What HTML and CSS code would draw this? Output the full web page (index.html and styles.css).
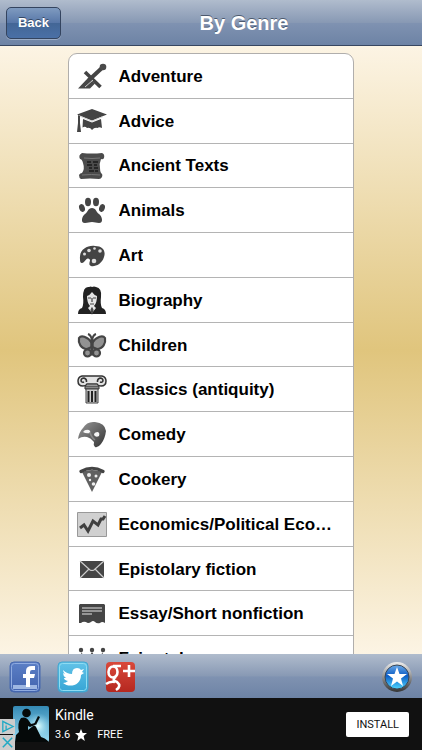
FILE: index.html
```html
<!DOCTYPE html>
<html lang="en">
<head>
<meta charset="utf-8">
<meta name="viewport" content="width=device-width, initial-scale=1">
<title>By Genre</title>
<link rel="stylesheet" href="styles.css">
</head>
<body>
<header class="navbar">
  <button class="back" type="button">Back</button>
  <h1 class="title">By Genre</h1>
</header>

<main class="content">
  <ul class="genres">
    <li><a class="genre" href="#adventure">
      <svg class="icon" viewBox="0 0 30 30"><g fill="none" stroke="#444"><path d="M12 18 26 5" stroke-width="4"/><path d="m8 10 15.500 15" stroke-width="3.600"/></g><circle cx="26" cy="5" r="3.300" fill="#4a4a4a"/><path fill="#484848" d="m1 26.500 10-10.500 7 5.500-5 5z"/><path d="m8 25 8-7" stroke="#ccc" stroke-width="1"/></svg>
      <span class="name">Adventure</span></a></li>
    <li><a class="genre" href="#advice">
      <svg class="icon" viewBox="0 0 30 30"><g fill="#444"><path d="M0 7.500 15 2l15 5.500L15 13.500zM6 12l9 3.500L24 12l1 9q-3-1.500-4.500 0-3-1-5.500 2-2-3-5-2-2-2-4.500-.5z"/><path d="m1 8 2 1v7l1 9H0l1-9z"/></g><path d="M3 9.200 15 14.300 26 9.500" fill="none" stroke="#ccc" stroke-width=".8"/></svg>
      <span class="name">Advice</span></a></li>
    <li><a class="genre" href="#ancient-texts">
      <svg class="icon" viewBox="0 0 30 30"><path fill="#4b4b4b" d="M5 2q10 1 20 0 3 1 2 5-1 2-3 1-2 5-1 9 0 4 1 5 2 1 1 4-1 2-3 2-9-1-18 0-2-1-2-4 1-2 3-2 3-4 1-10-1-4-3-4-2-4 2-6z"/><path d="M7 7q8 1 16 0M5 24q10-1 18 0" fill="none" stroke="#777"/><path d="M10 11h4m2 0h5M10 14h5m2 0h3m-8 3h3m2 0h4m-9 3h5m1 0h3" stroke="#1b1b1b" stroke-width="1.300"/></svg>
      <span class="name">Ancient Texts</span></a></li>
    <li><a class="genre" href="#animals">
      <svg class="icon" viewBox="0 0 30 30"><g fill="#454545"><ellipse cx="11" cy="6" rx="3" ry="4.200"/><ellipse cx="19" cy="6" rx="3" ry="4.200"/><ellipse cx="5" cy="12" rx="2.800" ry="4" transform="rotate(-20 5 12)"/><ellipse cx="25" cy="12" rx="2.800" ry="4" transform="rotate(20 25 12)"/><path d="M15 12c4 0 4 4 7 6s5 9 0 9c-3 0-4-1-7-1s-4 1-7 1c-5 0-3-7 0-9s3-6 7-6z"/></g></svg>
      <span class="name">Animals</span></a></li>
    <li><a class="genre" href="#art">
      <svg class="icon" viewBox="0 0 30 30"><path fill="#444" d="M3 18C2 9 10 4 18 5c8 0 11 5 9 11-2 7-9 10-13 9-4-2 1-6-2-7-3-2-4 4-7 4-2 0-2-2-2-4z"/><g fill="#ddd"><circle cx="7.500" cy="13" r="1.500"/><circle cx="12" cy="9.500" r="1.800"/><circle cx="17.500" cy="7.500" r="1.300"/><circle cx="23" cy="10" r="1.800"/><circle cx="17" cy="20" r="2.300"/></g></svg>
      <span class="name">Art</span></a></li>
    <li><a class="genre" href="#biography">
      <svg class="icon" viewBox="0 0 30 30"><path fill="#222" d="M1 28q0-5 4-6 2-4 1-11Q6 0 12 1q2-1 3 0 2-1 4 0 6 1 5 10-1 7 1 11 4 1 4 6z"/><path fill="#e4e4e4" d="M10 10q3-1 5-4 2 3 5 4 0 7-3 10l2 2-4 5-4-5 2-2q-3-3-3-10z"/><path d="M11 12h3m2 0h3m-4 0v4m-2 2h4m-2 4-1 2 1 3 1-3z" fill="#555" stroke="#444" stroke-width="1.200"/></svg>
      <span class="name">Biography</span></a></li>
    <li><a class="genre" href="#children">
      <svg class="icon" viewBox="0 0 30 30"><g fill="#929292" stroke="#454545" stroke-width="2.200"><path d="M15 12C10 5 4 4 2 7c-1 5 2 11 8 11l5-2 5 2c6 0 9-6 8-11-2-3-8-2-13 5z"/><circle cx="10.500" cy="22" r="3.500"/><circle cx="19.500" cy="22" r="3.500"/></g><path d="M15 9v15M15 9q-1-5-4-6M15 9q1-5 4-6" fill="none" stroke="#444" stroke-width="2"/><path d="M15 9v14" stroke="#444" stroke-width="3.400" stroke-linecap="round"/></svg>
      <span class="name">Children</span></a></li>
    <li><a class="genre" href="#classics">
      <svg class="icon" viewBox="0 0 30 30"><path d="M5 1h20q4 1 4 5 0 5-5 5-3 0-4-2H10q-1 2-4 2-5 0-5-5 0-4 4-5z" fill="#e2e2e2" stroke="#333" stroke-width="1.500"/><path d="M7 7Q5 8 4 6q0-3 3-3 3 1 2.500 4M23 7q2 1 3-1 0-3-3-3-3 1-2.500 4" fill="none" stroke="#333" stroke-width="1.500"/><path d="M8 11h14v3H8z" fill="#888" stroke="#333"/><path d="M9 14h12v14H9z" fill="#ccc" stroke="#444"/><path d="M11.500 16v11m3.500-11v11m3.500-11v11" stroke="#222" stroke-width="2"/></svg>
      <span class="name">Classics (antiquity)</span></a></li>
    <li><a class="genre" href="#comedy">
      <svg class="icon" viewBox="0 0 30 30"><defs><linearGradient id="mask" x2="1" y2="1"><stop stop-color="#999"/><stop offset="1" stop-color="#333"/></linearGradient></defs><path fill="url(#mask)" d="M1 19Q2 12 6 8q4-7 12-6 10 1 11 9-1 8-5 13-3 4-6 3-2-2-1-5-3-4-7-5-5-1-9 2z"/><path fill="#f5f5f5" d="M6 12q2-3 6-2 2 1 1 3-4 1-7-1zM17 15q0-3 4-3 2 1 1 4-3 2-5-1z"/><path d="M13 12q1 5 5 8" fill="none" stroke="#888" stroke-width="1.500"/></svg>
      <span class="name">Comedy</span></a></li>
    <li><a class="genre" href="#cookery">
      <svg class="icon" viewBox="0 0 30 30"><path fill="#606060" d="M5 7q10-4 20 0L15 27z"/><path d="M4 6.500Q15 0 26 6.500" fill="none" stroke="#444" stroke-width="3.200" stroke-linecap="round"/><g fill="#eee"><circle cx="12" cy="10" r="2"/><circle cx="19" cy="11" r="1.500"/><circle cx="13" cy="15" r="1.200"/><circle cx="16.500" cy="19" r="1.800"/></g></svg>
      <span class="name">Cookery</span></a></li>
    <li><a class="genre" href="#economics">
      <svg class="icon" viewBox="0 0 30 30"><path fill="#d0d0d0" stroke="#999" d="M.5 2.500h29v24H.5z"/><path d="m3 18 4-3 4 6 5-10 5 4 3-6h2l2-3" fill="none" stroke="#404040" stroke-width="3"/></svg>
      <span class="name">Economics/Political Eco…</span></a></li>
    <li><a class="genre" href="#epistolary">
      <svg class="icon" viewBox="0 0 30 30"><path fill="#454545" d="M3 6h24v17H3z"/><path d="m3 6 10 9q2 1 4 0l10-9M3 23l9-9m6 0 9 9" fill="none" stroke="#ccc" stroke-width="1.200"/></svg>
      <span class="name">Epistolary fiction</span></a></li>
    <li><a class="genre" href="#essay">
      <svg class="icon" viewBox="0 0 30 30"><path fill="#454545" d="M3 5h24l1 1v18q-3-2-5 0-3 1-5-1-2-2-4 0-3 2-5 0-3-1-5 1H2V6z"/><path d="M5 9h20M5 12h20M5 15h10" stroke="#e5e5e5" stroke-width="1.200"/></svg>
      <span class="name">Essay/Short nonfiction</span></a></li>
    <li><a class="genre" href="#fairy-tales">
      <svg class="icon" viewBox="0 0 30 30"><g fill="#454545"><circle cx="4" cy="6" r="2.200"/><circle cx="15" cy="6" r="2.200"/><circle cx="26" cy="6" r="2.200"/><path d="m4 8 6 8 5-8 5 8 6-8-3 17H7z"/></g></svg>
      <span class="name">Fairy tales</span></a></li>
  </ul>
</main>

<nav class="toolbar" aria-label="Share">
  <a class="tool" href="#facebook" aria-label="Facebook"><svg viewBox="0 0 32 32"><defs><linearGradient id="fb" x2="0" y2="1"><stop stop-color="#5c80c6"/><stop offset="1" stop-color="#4263ae"/></linearGradient></defs><rect x="1" y="1" width="30" height="30" rx="4" fill="url(#fb)" stroke="#4668ae" stroke-width="1"/><rect x="2.500" y="2.500" width="27" height="27" rx="3" fill="none" stroke="#8fabe0"/><path fill="#9eb7e2" d="M4 24h24v4H4z"/><path fill="#fff" d="M17 26V17h-3v-4h3v-3q0-5 6-5h3v4h-3q-2 0-2 2v2h5l-1 4h-4v9z"/></svg></a>
  <a class="tool" href="#twitter" aria-label="Twitter"><svg viewBox="0 0 32 32"><defs><linearGradient id="tw" x2="0" y2="1"><stop stop-color="#62c3e8"/><stop offset="1" stop-color="#36a5d5"/></linearGradient></defs><rect x="1" y="1" width="30" height="30" rx="4" fill="url(#tw)" stroke="#43a6cf" stroke-width="1"/><rect x="2.500" y="2.500" width="27" height="27" rx="3" fill="none" stroke="#8edcf2"/><path fill="#fff" d="M6 9q4 4 9 4 0-6 5-6 3 0 4 2l3-1-2 3 2 1-3 2c0 11-12 13-18 8q3 0 5-2-4-1-4-3h2q-3-2-3-5l2 1q-2-2-2-4z"/></svg></a>
  <a class="tool" href="#google-plus" aria-label="Google Plus"><svg viewBox="0 0 32 32"><defs><linearGradient id="gp" x2="0" y2="1"><stop stop-color="#d9493b"/><stop offset="1" stop-color="#b52820"/></linearGradient></defs><rect x="1" y="1" width="29" height="30" rx="4" fill="url(#gp)"/><g fill="none" stroke="#fff"><ellipse cx="8" cy="11" rx="4.500" ry="5.500" stroke-width="2.600"/><path d="M8 5h8M11 16q-5 3 1 5 5 4-1 8M1 23q4-3 9-2" stroke-width="2.600"/><path d="M18 10h12M24 4v12" stroke-width="2.600"/></g></svg></a>
  <a class="tool favorite" href="#favorites" aria-label="Favorites"><svg viewBox="0 0 32 32"><defs><linearGradient id="ring" x2="0" y2="1"><stop stop-color="#eee"/><stop offset="1" stop-color="#343434"/></linearGradient><linearGradient id="orb" x2="0" y2="1"><stop stop-color="#6aa9e8"/><stop offset=".45" stop-color="#0c5cc4"/><stop offset="1" stop-color="#4fd6ff"/></linearGradient></defs><circle cx="16" cy="16" r="15" fill="url(#ring)"/><circle cx="16" cy="16" r="12" fill="url(#orb)" stroke="#3b4756"/><path fill="#fff" d="m16 6 2.500 7H26l-6 4.500 2 7.500-6-4.500L10 25l2-7.500L6 13h7.500z"/></svg></a>
</nav>

<aside class="ad">
  <svg class="cover" viewBox="0 0 36 36" role="img" aria-label="Kindle"><defs><linearGradient id="sky" x2="0" y2="1"><stop stop-color="#3489b4"/><stop offset="1" stop-color="#9bdcf3"/></linearGradient><radialGradient id="glow"><stop stop-color="#e2ffff"/><stop offset="1" stop-color="#8bd4ed" stop-opacity="0"/></radialGradient></defs><rect width="36" height="36" rx="2" fill="url(#sky)"/><circle cx="25" cy="20" r="13" fill="url(#glow)"/><g fill="#050909"><circle cx="13.500" cy="7" r="4.300"/><path d="M8 12q5-2 8 3l2 3 4-1v2l-5 2-2-1v4l5-4q2-1 3 1l5 10q4 1 7 4v1H2l1-7 3-3Q4 17 8 12z"/><path d="m21 18 4-8 2 1-4 8z"/></g></svg>
  <div class="ad-copy">
    <strong class="ad-name">Kindle</strong>
    <span class="ad-meta"><span>3.6</span><svg class="rating" viewBox="0 0 12 12"><path fill="#fff" d="m6 0 1.700 4H12L8.600 7l1.200 5L6 9.200 2.200 12l1.200-5L0 4h4.300z"/></svg><span>FREE</span></span>
  </div>
  <a class="install" href="#install">INSTALL</a>
  <div class="ad-controls">
    <button type="button" aria-label="Ad information"><svg viewBox="0 0 16 16"><path d="M3 2.500v11L14 8z M6.500 7v4M6.500 4.500v1" fill="none" stroke="#20a9c4" stroke-width="1.400"/></svg></button>
    <button type="button" aria-label="Close ad"><svg viewBox="0 0 16 16"><path d="m3 3 10 10M13 3 3 13" fill="none" stroke="#20a9c4" stroke-width="1.600"/></svg></button>
  </div>
</aside>
</body>
</html>
```

FILE: styles.css
```css
* { box-sizing: border-box; }

body {
  margin: 0;
  height: 100vh;
  display: flex;
  flex-direction: column;
  overflow: hidden;
  background: #111;
  font-family: "Liberation Sans", Arial, sans-serif;
}

.navbar {
  flex: none;
  display: grid;
  grid-template-columns: 1fr auto 1fr;
  align-items: center;
  min-height: 46px;
  padding: 0 6px;
  border-bottom: 1px solid #374660;
  background: linear-gradient(#b0bccd, #8899b4 50%, #7f92b1 52%, #6d83a5);
}

.back {
  justify-self: start;
  height: 32px;
  width: 55px;
  padding: 0;
  border: 1px solid #34445f;
  border-radius: 5px;
  color: #fff;
  background: linear-gradient(#7f9bc0, #5877a8 49%, #436696 51%, #4a70a6);
  box-shadow: 0 1px #9cadc7;
  font: bold 13px "Liberation Sans", Arial, sans-serif;
  text-shadow: 0 -1px #354865;
}

.title {
  margin: 0;
  padding-left: 66px;
  color: #fff;
  font-size: 20px;
  line-height: 24px;
  text-shadow: 0 -1px #4c596e;
}

.content {
  flex: 1;
  min-height: 0;
  overflow: hidden;
  padding: 7px 16% 0;
  background: linear-gradient(#fcf4e4, #e0c57d 50%, #fcf4e4);
}

.genres {
  display: grid;
  grid-auto-rows: 1fr;
  min-height: 629px;
  margin: 0;
  padding: 0;
  list-style: none;
  overflow: hidden;
  border: 1px solid #b0aeac;
  border-radius: 9px;
  background: #fff;
}

.genres li { border-bottom: 1px solid #b4b4b4; }

.genre {
  display: flex;
  align-items: center;
  gap: 12px;
  height: 100%;
  padding: 2px 8px 0;
  color: #000;
  font-size: 17px;
  font-weight: bold;
  line-height: 20px;
  text-decoration: none;
}

.icon {
  flex: none;
  width: 30px;
  height: 30px;
}

.name {
  min-width: 0;
  overflow: hidden;
  white-space: nowrap;
  text-overflow: ellipsis;
}

.toolbar {
  flex: none;
  display: flex;
  align-items: center;
  gap: 16px;
  min-height: 44px;
  padding: 2px 9px 0;
  background: linear-gradient(#b0bccd, #8899b4 50%, #7f92b1 52%, #6d83a5);
}

.tool, .tool svg {
  display: block;
  width: 32px;
  height: 32px;
}

.favorite { margin-left: auto; }

.ad {
  position: relative;
  flex: none;
  display: flex;
  align-items: center;
  gap: 6px;
  min-height: 52px;
  padding: 0 13px;
  border-radius: 3px 3px 0 0;
  background: #111;
  color: #fff;
  font-family: Roboto, sans-serif;
}

.cover {
  width: 36px;
  height: 36px;
}

.ad-copy {
  display: flex;
  flex-direction: column;
  gap: 4px;
}

.ad-name {
  font-size: 14px;
  font-weight: 400;
  line-height: 18px;
}

.ad-meta {
  display: flex;
  align-items: center;
  gap: 5px;
  font-size: 11px;
  line-height: 14px;
}

.rating {
  width: 12px;
  height: 12px;
  margin-right: 5px;
}

.install {
  margin-left: auto;
  padding: 4px 10px;
  border-radius: 2px;
  background: #fff;
  color: #111;
  font-size: 11px;
  line-height: 17px;
  text-decoration: none;
}

.ad-controls {
  position: absolute;
  bottom: 0;
  left: 0;
  display: grid;
  gap: 1px;
}

.ad-controls button {
  width: 15px;
  height: 15px;
  padding: 0;
  border: 0;
  background: #ccc;
}

.ad-controls svg {
  display: block;
  width: 15px;
  height: 15px;
}
```
